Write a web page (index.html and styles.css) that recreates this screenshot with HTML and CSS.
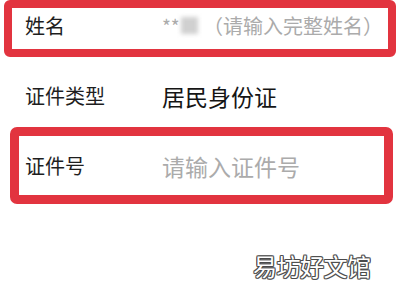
FILE: index.html
```html
<!DOCTYPE html>
<html lang="zh">
<head>
<meta charset="utf-8">
<link rel="stylesheet" href="styles.css">
</head>
<body>
<div class="page">
  <div class="field field-name">
    <span class="label">姓名</span>
    <span class="value placeholder"><span class="stars">**</span><span class="blur"><span class="blur-inner"></span></span>（请输入完整姓名）</span>
  </div>
  <div class="field field-type">
    <span class="label">证件类型</span>
    <span class="value big">居民身份证</span>
  </div>
  <div class="field field-id">
    <span class="label">证件号</span>
    <span class="value big placeholder">请输入证件号</span>
  </div>
  <div class="watermark">易坊好文馆</div>
</div>
</body>
</html>
```

FILE: styles.css
```css
html, body {
  margin: 0;
  padding: 0;
  background: #ffffff;
}
body {
  width: 400px;
  height: 300px;
  overflow: hidden;
  font-family: "Noto Sans CJK SC", "Noto Sans", sans-serif;
}
.page {
  position: relative;
  width: 400px;
  height: 300px;
  display: flex;
  flex-direction: column;
}
.field {
  display: flex;
  align-items: center;
  box-sizing: border-box;
}
.label {
  font-size: 20px;
  line-height: 24px;
  color: #1e1e1e;
  flex: none;
}
.value {
  font-size: 20px;
  line-height: 24px;
  color: #151515;
  white-space: nowrap;
  display: flex;
  align-items: center;
}
.value.big {
  font-size: 23px;
  line-height: 28px;
}
.placeholder {
  color: #ababab;
}
.field-name {
  margin-left: 4px;
  width: 392px;
  height: 57px;
  border: 8px solid #e2343f;
  border-radius: 6px;
  padding: 0 0 6px 13px;
}
.field-name .label {
  width: 137px;
}
.stars {
  width: 18px;
  font-size: 19px;
}
.blur {
  width: 23px;
  height: 24px;
  display: flex;
  align-items: center;
}
.blur-inner {
  display: block;
  width: 17px;
  height: 17px;
  margin-left: 1px;
  background: #d0d0d0;
  filter: blur(2px);
}
.field-type {
  margin-top: 24px;
  height: 30px;
  padding-left: 25px;
}
.field-type .label {
  width: 137px;
}
.field-id {
  margin-top: 16px;
  margin-left: 10px;
  width: 383px;
  height: 77px;
  border: 9px solid #e2343f;
  border-radius: 7px;
  padding-left: 6px;
}
.field-id .label {
  width: 137px;
}
.watermark {
  position: absolute;
  left: 253px;
  top: 252px;
  font-size: 24px;
  line-height: 28px;
  color: #ffffff;
  letter-spacing: -0.5px;
  text-shadow:
    1px 0 0 #4a4a4a,
    -1px 0 0 #4a4a4a,
    0 1px 0 #4a4a4a,
    0 -1px 0 #4a4a4a,
    1px 1px 0 #6a6a6a,
    -1px -1px 0 #6a6a6a,
    1px -1px 0 #6a6a6a,
    -1px 1px 0 #6a6a6a;
}
```
